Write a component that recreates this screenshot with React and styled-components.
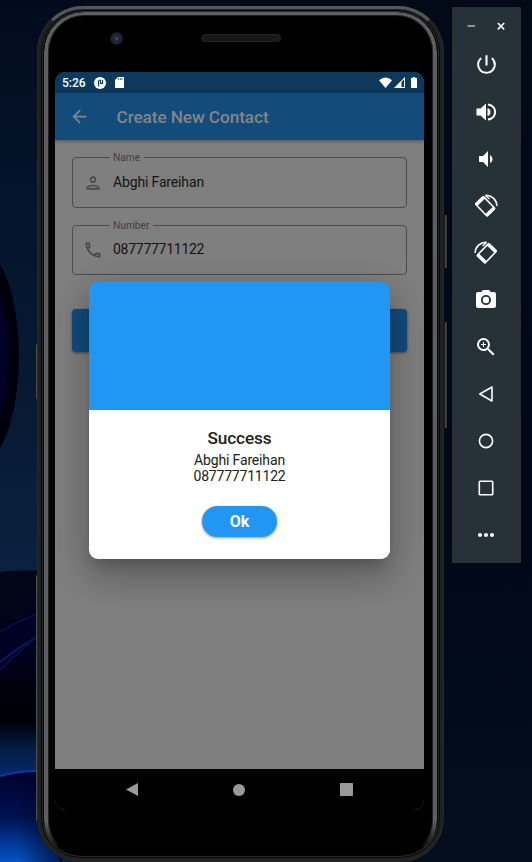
import React from 'react';
import styled, { createGlobalStyle, css } from 'styled-components';
import {
  MdPowerSettingsNew,
  MdVolumeDown,
  MdPhotoCamera,
  MdZoomIn,
  MdOutlinePerson,
  MdOutlinePhone,
  MdArrowBack,
  MdMoreHoriz,
} from 'react-icons/md';

const GlobalStyle = createGlobalStyle`
  * { box-sizing: border-box; }
  body { margin: 0; background: #020a1a; font-family: Roboto, sans-serif; }
  button { font: inherit; border: 0; padding: 0; }
  svg { display: block; flex: none; }
`;

const Desktop = styled.main`
  position: relative;
  display: flex;
  align-items: flex-start;
  width: 532px;
  height: 862px;
  padding: 6px 10px 0 37px;
  overflow: hidden;
`;

const WallpaperArt = styled.svg`
  position: absolute;
  inset: 0;
`;

const Phone = styled.section`
  position: relative;
  flex: none;
  display: flex;
  flex-direction: column;
  width: 407px;
  height: 856px;
  padding: 0 20px 0 18px;
  border-radius: 46px 46px 44px 44px;
  background: #000;
  box-shadow: inset 0 0 0 1px #282828, inset 0 0 0 4px #202121,
    inset 0 0 0 5px #0a0a0a, inset 0 0 0 6px #29292a, inset 0 0 0 7px #050505;

  &::before {
    content: '';
    position: absolute;
    inset: 0 1px 3px 1px;
    border: 3px solid transparent;
    border-top-color: #54565c;
    border-radius: 45px;
  }

  &::after {
    content: '';
    position: absolute;
    inset: 6px 7px 2px 7px;
    border: 4px solid #5d5f63;
    border-top-width: 3px;
    border-bottom-color: transparent;
    border-radius: 40px;
    box-shadow: inset 0 0 0 1px #202122;
    mask-image: linear-gradient(#000 0 810px, transparent 838px);
  }
`;

const SideKey = styled.i`
  position: absolute;
  left: ${({ $left }) => $left}px;
  top: ${({ $top }) => $top}px;
  width: ${({ $width }) => $width}px;
  height: ${({ $height }) => $height}px;
  border-radius: 0 1px 1px 0;
  background: ${({ $width }) =>
    $width > 1 ? 'linear-gradient(90deg, #191919 0 40%, #4c4c4c 60%, #2b2b2b)' : '#4c4d4f'};
`;

const Forehead = styled.div`
  position: relative;
  flex: none;
  display: flex;
  align-items: flex-start;
  height: 66px;
  padding: 26px 0 0 55px;
`;

const Camera = styled.i`
  width: 13px;
  height: 13px;
  border-radius: 50%;
  background: radial-gradient(circle, #38447c 0 1px, #20264c 2px 3px, #222327 4px 5px, #161617 6.5px);
`;

const Speaker = styled.i`
  width: 80px;
  height: 8px;
  margin: 2px 0 0 78px;
  border-radius: 4px;
  border: 1px solid #242424;
  background: #181818;
`;

const Screen = styled.div`
  position: relative;
  z-index: 1;
  display: flex;
  flex-direction: column;
  flex: none;
  width: 369px;
  height: 738px;
  overflow: hidden;
  border-radius: 11px;
  background: #7f7f7f;
`;

const StatusBar = styled.header`
  display: flex;
  align-items: center;
  flex: none;
  height: 21px;
  padding: 0 7px;
  background: #0d395c;
  color: #fff;
  font-size: 12px;
  font-weight: 500;
`;

const StatusGroup = styled.div`
  display: flex;
  align-items: center;
  gap: ${({ $gap }) => $gap}px;
  margin-left: ${({ $end }) => ($end ? 'auto' : '0')};
`;

const AppBar = styled.header`
  display: flex;
  align-items: center;
  flex: none;
  height: 47px;
  padding: 0 14px;
  gap: 27px;
  background: #124c7b;
  color: #858585;
  box-shadow: 0 1px 4px rgba(0, 0, 0, 0.35);
`;

const Title = styled.h1`
  margin: 0 0 0 -0.5px;
  font-size: 17.2px;
  letter-spacing: -0.08px;
  font-weight: 500;
  line-height: 20px;
`;

const Form = styled.form`
  flex: 1;
  display: flex;
  flex-direction: column;
  padding: 17px 17px 0;
`;

const Field = styled.label`
  position: relative;
  display: flex;
  align-items: center;
  height: ${({ $height }) => $height}px;
  margin-bottom: 17px;
  padding: 0 0 0 10px;
  gap: 10px;
  border: 1px solid #4d4d4d;
  border-radius: 4px;
  color: #484848;
`;

const FieldName = styled.span`
  position: absolute;
  top: -7px;
  left: 37px;
  padding: 0 4px 0 3px;
  background: #7f7f7f;
  color: #3f3f3f;
  font-size: 10.2px;
  line-height: 13px;
`;

const FieldValue = styled.span`
  color: #141414;
  margin-bottom: 2px;
  font-size: 14px;
  line-height: 18px;
  letter-spacing: ${({ $spacing }) => $spacing}px;
`;

const SubmitButton = styled.button`
  height: 43px;
  margin-top: 17px;
  border-radius: 4px;
  background: #124c7b;
  box-shadow: 0 1px 3px rgba(0, 0, 0, 0.45);
`;

const NavBar = styled.nav`
  display: flex;
  flex: none;
  height: 41px;
  padding: 0 24px 0 23px;
  justify-content: space-between;
  align-items: center;
  background: #000;
`;

const NavButton = styled.button`
  width: 107px;
  height: 40px;
  background: none;
  display: flex;
  align-items: center;
  justify-content: center;
`;

const Dialog = styled.section`
  position: absolute;
  left: 34px;
  top: 210px;
  width: 301px;
  height: 277px;
  display: flex;
  flex-direction: column;
  align-items: center;
  border-radius: 9px;
  overflow: hidden;
  background: linear-gradient(#2196f3 0 60px, #fff 60px);
  color: #212121;
  box-shadow: 0 10px 14px -6px rgba(0, 0, 0, 0.2),
    0 20px 32px 3px rgba(0, 0, 0, 0.14), 0 8px 38px 7px rgba(0, 0, 0, 0.12);
`;

const DialogBanner = styled.div`
  flex: none;
  width: 100%;
  height: 128px;
  background: #2196f3;
`;

const DialogTitle = styled.h2`
  margin: 18px 0 4px;
  font-size: 17.2px;
  letter-spacing: -0.1px;
  font-weight: 500;
  line-height: 20px;
`;

const DialogText = styled.p`
  margin: 0;
  font-size: 14px;
  line-height: 16px;
  letter-spacing: ${({ $spacing }) => $spacing}px;
`;

const OkButton = styled.button`
  width: 75px;
  height: 31px;
  margin-top: 22px;
  border-radius: 16px;
  background: #2196f3;
  color: #fff;
  font-size: 16px;
  font-weight: 700;
  box-shadow: 0 1px 3px rgba(0, 0, 0, 0.4);
`;

const EmulatorPanel = styled.aside`
  position: relative;
  flex: none;
  display: flex;
  flex-direction: column;
  width: 71px;
  height: 558px;
  margin-left: 7px;
  border: 1px solid #020507;
  background: #263238;
  color: #fff;
`;

const WindowControls = styled.div`
  display: flex;
  flex: none;
  justify-content: center;
  gap: 18px;
  height: 34px;
  padding: 13px 1px 0 0;
`;

const ControlIcon = styled.svg`
  width: 12px;
  height: 12px;
  fill: none;
  stroke: ${({ $muted }) => ($muted ? '#98a0a4' : '#fff')};
  stroke-width: ${({ $muted }) => ($muted ? 1.8 : 1.5)};
`;

const PanelButton = styled.button`
  flex: none;
  height: 47px;
  display: flex;
  align-items: center;
  justify-content: center;
  padding-right: 1px;
  background: none;
  color: #fff;
`;

const RotateArt = styled.svg`
  width: 24px;
  height: 24px;
  fill: none;
  stroke: #fff;
  ${({ $mirror }) => $mirror && css`transform: scaleX(-1);`}
`;

const OutlineArt = styled.svg`
  width: 24px;
  height: 24px;
  fill: none;
  stroke: #fff;
  stroke-width: 1.6;
  stroke-linejoin: round;
`;

function Wallpaper() {
  return (
    <WallpaperArt width="532" height="862" viewBox="0 0 532 862">
      <defs>
        <linearGradient id="sky" x1="0" y1="0" x2="0" y2="1">
          <stop offset="0" stopColor="#020b1e" />
          <stop offset="0.25" stopColor="#04152c" />
          <stop offset="0.5" stopColor="#071b36" />
          <stop offset="0.67" stopColor="#0a2140" />
        </linearGradient>
        <linearGradient id="east" x1="0" y1="0" x2="0" y2="1">
          <stop offset="0" stopColor="#020a18" />
          <stop offset="0.6" stopColor="#010817" />
          <stop offset="1" stopColor="#030e1f" />
        </linearGradient>
        <radialGradient id="orb" cx="0.5" cy="0.5" r="0.5">
          <stop offset="0" stopColor="#01012e" />
          <stop offset="0.68" stopColor="#010126" />
          <stop offset="0.84" stopColor="#00000d" />
          <stop offset="1" stopColor="#00000c" />
        </radialGradient>
        <linearGradient id="petal" x1="0" y1="0" x2="0" y2="1">
          <stop offset="0" stopColor="#020613" />
          <stop offset="0.35" stopColor="#01021f" />
          <stop offset="0.62" stopColor="#000008" />
          <stop offset="0.72" stopColor="#000108" />
          <stop offset="0.86" stopColor="#041e45" />
          <stop offset="1" stopColor="#052c72" />
        </linearGradient>
        <linearGradient id="glow" x1="0" y1="0" x2="0" y2="1">
          <stop offset="0" stopColor="#00012b" />
          <stop offset="0.5" stopColor="#011050" />
          <stop offset="1" stopColor="#0354c4" />
        </linearGradient>
        <linearGradient id="shade" x1="0" y1="0" x2="1" y2="0">
          <stop offset="0.3" stopColor="#000018" stopOpacity="0" />
          <stop offset="1" stopColor="#000018" stopOpacity="0.7" />
        </linearGradient>
      </defs>
      <rect width="240" height="862" fill="url(#sky)" />
      <rect x="240" width="292" height="862" fill="url(#east)" />
      <ellipse cx="-23" cy="356" rx="42" ry="110" fill="url(#orb)" />
      <path d="M0 572Q20 569 60 571V780H0Z" fill="url(#petal)" />
      <path d="M0 632Q18 618 60 605V625Q25 644 0 670Z" fill="#010125" />
      <path d="M0 632Q18 620 60 605" stroke="#07133f" strokeWidth="1.5" fill="none" />
      <path d="M0 662Q18 648 36 637" stroke="#091d59" strokeWidth="2" fill="none" />
      <path d="M0 670Q18 652 36 638" stroke="#050e3f" strokeWidth="2" fill="none" />
      <path d="M0 776Q20 771 60 771V862H0Z" fill="url(#glow)" />
      <path d="M0 776Q20 771 36 771" stroke="#1733a6" strokeWidth="2" fill="none" />
      <rect y="776" width="62" height="86" fill="url(#shade)" />
    </WallpaperArt>
  );
}

function StatusIcons() {
  return (
    <StatusGroup $gap={2} $end>
      <svg width="13" height="11" viewBox="0 0 13 11">
        <path d="M0 3.2Q6.5-2.2 13 3.2L6.5 11Z" fill="#fff" />
      </svg>
      <svg width="11" height="11" viewBox="0 0 11 11">
        <path d="M0 11L11 0V11Z" fill="#fff" />
        <path d="M7.5 5L10 2.6V10H7.5Z" fill="#0d395c" />
      </svg>
      <svg width="10" height="11" viewBox="0 0 10 11">
        <path d="M4 1H5.8V0h2.4v1H10v10H4Z" fill="#fff" />
      </svg>
    </StatusGroup>
  );
}

function RotateIcon({ mirror }) {
  return (
    <RotateArt viewBox="0 0 24 24" $mirror={mirror}>
      <g transform="rotate(46 11.2 12.3)">
        <rect x="2.8" y="6.8" width="16.8" height="11" rx="1" strokeWidth="1.6" />
        <path d="M4 6.6V18M18.4 6.6V18" strokeWidth="3" />
      </g>
      <path d="M11.5 1.2C17.5 .9 22.7 5.8 23 12" strokeWidth="1.5" />
      <path d="M11.5 1.4L15.5 5" strokeWidth="1.3" />
    </RotateArt>
  );
}

export default function App() {
  return (
    <>
      <GlobalStyle />
      <Desktop>
        <Wallpaper />
        <Phone>
          <SideKey $left={-1} $top={338} $width={1} $height={55} />
          <SideKey $left={-1} $top={569} $width={1} $height={246} />
          <SideKey $left={406} $top={209} $width={4} $height={53} />
          <SideKey $left={406} $top={316} $width={4} $height={106} />
          <Forehead>
            <Camera />
            <Speaker />
          </Forehead>
          <Screen>
            <StatusBar>
              <StatusGroup $gap={8.5}>
                <span>5:26</span>
                <svg width="12" height="12" viewBox="0 0 12 12">
                  <circle cx="6" cy="6" r="6" fill="#fff" />
                  <path d="M4.6 3.4V9.6M4.6 3.2H6.6V6.4H8.6V3" fill="none" stroke="#0d395c" strokeWidth="1.1" />
                </svg>
                <svg width="9" height="11" viewBox="0 0 9 11">
                  <path d="M3 0H9V11H0V3Z" fill="#fff" />
                  <path d="M3.7 1.2V3M5.4 1.2V3M7.1 1.2V3" stroke="#0d395c" strokeWidth=".8" />
                </svg>
              </StatusGroup>
              <StatusIcons />
            </StatusBar>
            <AppBar>
              <MdArrowBack size={21} />
              <Title>Create New Contact</Title>
            </AppBar>
            <Form>
              <Field $height={51}>
                <FieldName>Name</FieldName>
                <MdOutlinePerson size={20} />
                <FieldValue $spacing={-0.15}>Abghi Fareihan</FieldValue>
              </Field>
              <Field $height={50}>
                <FieldName>Number</FieldName>
                <MdOutlinePhone size={20} />
                <FieldValue $spacing={-0.27}>087777711122</FieldValue>
              </Field>
              <SubmitButton type="button" />
            </Form>
            <NavBar>
              <NavButton>
                <svg width="12" height="13" viewBox="0 0 12 13">
                  <path d="M0 6.5L12 0V13Z" fill="#999" />
                </svg>
              </NavButton>
              <NavButton>
                <svg width="12" height="12" viewBox="0 0 12 12">
                  <circle cx="6" cy="6" r="6" fill="#999" />
                </svg>
              </NavButton>
              <NavButton>
                <svg width="13" height="13" viewBox="0 0 13 13">
                  <rect width="13" height="13" rx=".8" fill="#999" />
                </svg>
              </NavButton>
            </NavBar>
            <Dialog>
              <DialogBanner />
              <DialogTitle>Success</DialogTitle>
              <DialogText $spacing={-0.15}>Abghi Fareihan</DialogText>
              <DialogText $spacing={-0.2}>087777711122</DialogText>
              <OkButton>Ok</OkButton>
            </Dialog>
          </Screen>
        </Phone>
        <EmulatorPanel>
          <WindowControls>
            <ControlIcon $muted viewBox="0 0 12 12">
              <path d="M2.5 6H10" />
            </ControlIcon>
            <ControlIcon viewBox="0 0 12 12">
              <path d="M2.8 3L9.2 9.4M9.2 3L2.8 9.4" />
            </ControlIcon>
          </WindowControls>
          <PanelButton><MdPowerSettingsNew size={25} /></PanelButton>
          <PanelButton>
            <svg width="24" height="24" viewBox="0 0 24 24">
              <path d="M2.5 8.5H6.5L12 3.5V20.5L6.5 15.5H2.5Z" fill="#fff" />
              <path d="M13.5 8Q16.5 9 16.5 12T13.5 16Z" fill="#fff" />
              <path d="M14 4.4C23.5 6 23.5 18 14 19.6" stroke="#fff" strokeWidth="2" fill="none" />
            </svg>
          </PanelButton>
          <PanelButton><MdVolumeDown size={24} /></PanelButton>
          <PanelButton><RotateIcon /></PanelButton>
          <PanelButton><RotateIcon mirror /></PanelButton>
          <PanelButton><MdPhotoCamera size={24} /></PanelButton>
          <PanelButton><MdZoomIn size={24} /></PanelButton>
          <PanelButton>
            <OutlineArt viewBox="0 0 24 24"><path d="M5.8 12L18 5V19Z" /></OutlineArt>
          </PanelButton>
          <PanelButton>
            <OutlineArt viewBox="0 0 24 24"><circle cx="12" cy="12" r="6.6" /></OutlineArt>
          </PanelButton>
          <PanelButton>
            <OutlineArt viewBox="0 0 24 24"><rect x="5.3" y="5.3" width="13.4" height="13.4" rx=".8" /></OutlineArt>
          </PanelButton>
          <PanelButton><MdMoreHoriz size={24} /></PanelButton>
        </EmulatorPanel>
      </Desktop>
    </>
  );
}
